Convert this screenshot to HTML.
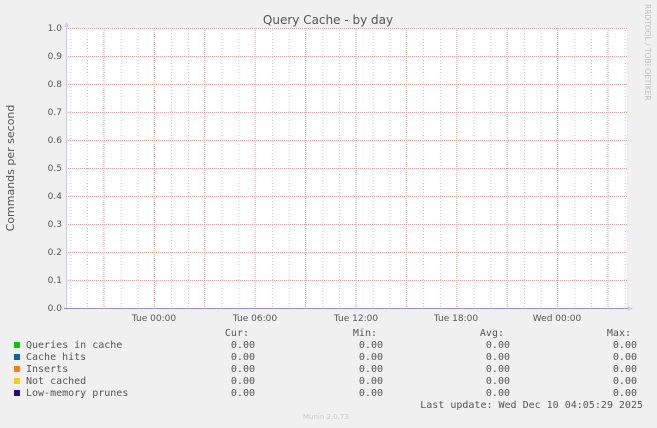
<!DOCTYPE html>
<html><head><style>
html,body{margin:0;padding:0;background:#f0f0f0;}
svg{display:block}
.t{font-family:"DejaVu Sans","Liberation Sans",sans-serif;font-size:9px;fill:#555}
.m{font-family:"DejaVu Sans Mono","Liberation Mono",monospace;font-size:10px;fill:#555}
</style></head><body>
<svg width="657" height="428" xmlns="http://www.w3.org/2000/svg">
<defs>
<pattern id="g" x="70.3" y="0" width="16.8" height="428" patternUnits="userSpaceOnUse">
<line x1="0.5" y1="0" x2="0.5" y2="428" stroke="#d0d0d0" stroke-width="1" stroke-dasharray="1,2"/>
</pattern>
<pattern id="r" x="103.4" y="0" width="50.4" height="428" patternUnits="userSpaceOnUse">
<rect x="0" y="0" width="1" height="428" fill="#fff"/>
<line x1="0.5" y1="0" x2="0.5" y2="428" stroke="#f2a8a8" stroke-width="1" stroke-dasharray="1,1"/>
</pattern>
<pattern id="h" x="0" y="28" width="657" height="28" patternUnits="userSpaceOnUse">
<line x1="0" y1="0.5" x2="657" y2="0.5" stroke="#f2a8a8" stroke-width="1" stroke-dasharray="1,1"/>
</pattern>
</defs>
<rect x="67" y="28" width="560" height="280" fill="#fff"/>
<rect x="67" y="28" width="560" height="280" fill="url(#g)"/>
<rect x="67" y="28" width="560" height="280" fill="url(#r)"/>
<rect x="67" y="28" width="560" height="280" fill="url(#h)"/>
<line x1="66.5" y1="26" x2="66.5" y2="310" stroke="#ccd" stroke-width="1"/>
<polygon points="64,27 69,27 66.5,22" fill="#ccf"/>
<line x1="64" y1="308.5" x2="629" y2="308.5" stroke="#9a8fd8" stroke-width="1"/>
<polygon points="628,306 628,311 633,308.5" fill="#ccf"/>
<text class="t" x="328" y="24" text-anchor="middle" style="font-size:12px">Query Cache - by day</text>
<text class="t" transform="translate(14,168) rotate(-90)" text-anchor="middle" style="font-size:11px">Commands per second</text>
<text class="t" transform="translate(645,4) rotate(90)" style="font-size:7.5px;fill:#c0c0c0">RRDTOOL / TOBI OETIKER</text>
<g class="t" text-anchor="end">
<text x="62" y="31">1.0</text><text x="62" y="59">0.9</text><text x="62" y="87">0.8</text>
<text x="62" y="115">0.7</text><text x="62" y="143">0.6</text><text x="62" y="171">0.5</text>
<text x="62" y="199">0.4</text><text x="62" y="227">0.3</text><text x="62" y="255">0.2</text>
<text x="62" y="283">0.1</text><text x="62" y="311">0.0</text>
</g>
<g class="t" text-anchor="middle">
<text x="154" y="321">Tue 00:00</text><text x="255" y="321">Tue 06:00</text>
<text x="356" y="321">Tue 12:00</text><text x="456" y="321">Tue 18:00</text>
<text x="557" y="321">Wed 00:00</text>
</g>
<rect x="14" y="342" width="6" height="6" fill="#00cc00"/>
<rect x="14" y="354" width="6" height="6" fill="#0066b3"/>
<rect x="14" y="366" width="6" height="6" fill="#ff8000"/>
<rect x="14" y="378" width="6" height="6" fill="#ffcc00"/>
<rect x="14" y="390" width="6" height="6" fill="#330099"/>
<g class="m">
<text x="26" y="348">Queries in cache</text>
<text x="26" y="360">Cache hits</text>
<text x="26" y="372">Inserts</text>
<text x="26" y="384">Not cached</text>
<text x="26" y="396">Low-memory prunes</text>
</g>
<g class="m" text-anchor="end">
<text x="249" y="336">Cur:</text><text x="377" y="336">Min:</text><text x="504" y="336">Avg:</text><text x="631" y="336">Max:</text>
<text x="255" y="348">0.00</text><text x="383" y="348">0.00</text><text x="510" y="348">0.00</text><text x="637" y="348">0.00</text>
<text x="255" y="360">0.00</text><text x="383" y="360">0.00</text><text x="510" y="360">0.00</text><text x="637" y="360">0.00</text>
<text x="255" y="372">0.00</text><text x="383" y="372">0.00</text><text x="510" y="372">0.00</text><text x="637" y="372">0.00</text>
<text x="255" y="384">0.00</text><text x="383" y="384">0.00</text><text x="510" y="384">0.00</text><text x="637" y="384">0.00</text>
<text x="255" y="396">0.00</text><text x="383" y="396">0.00</text><text x="510" y="396">0.00</text><text x="637" y="396">0.00</text>
<text x="643" y="408">Last update: Wed Dec 10 04:05:29 2025</text>
</g>
<text class="t" x="303" y="419" style="font-size:7px;fill:#c8c8c8">Munin 2.0.73</text>
</svg>
</body></html>
